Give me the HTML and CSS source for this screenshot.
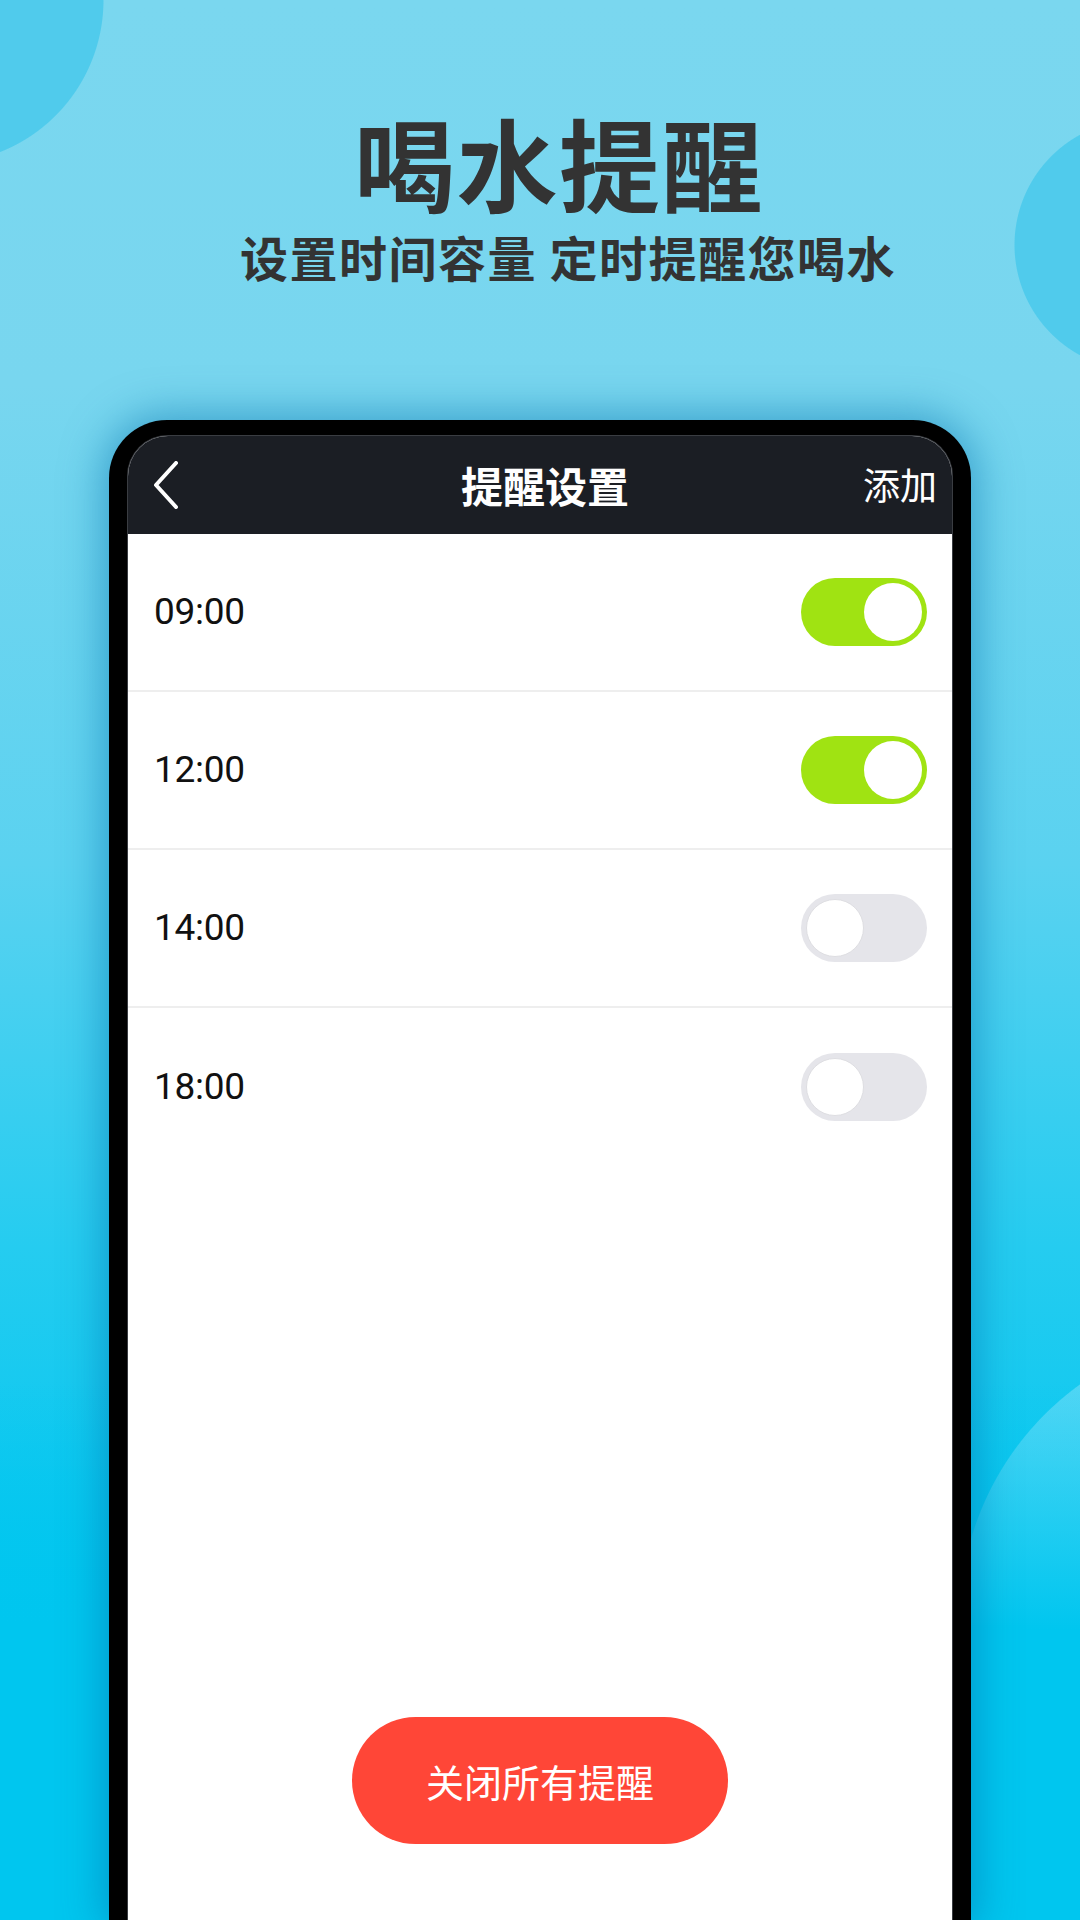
FILE: index.html
```html
<!DOCTYPE html>
<html lang="zh-CN">
<head>
    <meta charset="UTF-8">
    <meta name="viewport" content="width=device-width, initial-scale=1.0">
    <title>喝水提醒</title>
    <link rel="stylesheet" href="styles.css">
</head>
<body>
    <div class="intro">
        <h1 class="intro-title">喝水提醒</h1>
        <p class="intro-sub">设置时间容量 定时提醒您喝水</p>
    </div>

    <div class="phone">
        <div class="screen">
            <div class="topbar">
                <span class="back">
                    <svg width="26" height="48" viewBox="0 0 26 48">
                        <polyline points="23,2 3,24 23,46" fill="none" stroke="#fff" stroke-width="4" stroke-linecap="round" stroke-linejoin="round"/>
                    </svg>
                </span>
                <span class="topbar-title">提醒设置</span>
                <span class="topbar-action">添加</span>
            </div>

            <ul class="alarms">
                <li class="alarm">
                    <span class="alarm-time">09:00</span>
                    <span class="switch on"><span class="knob"></span></span>
                </li>
                <li class="alarm">
                    <span class="alarm-time">12:00</span>
                    <span class="switch on"><span class="knob"></span></span>
                </li>
                <li class="alarm">
                    <span class="alarm-time">14:00</span>
                    <span class="switch"><span class="knob"></span></span>
                </li>
                <li class="alarm">
                    <span class="alarm-time">18:00</span>
                    <span class="switch"><span class="knob"></span></span>
                </li>
            </ul>

            <button type="button" class="close-all">关闭所有提醒</button>
        </div>
    </div>
</body>
</html>
```

FILE: styles.css
```css
html, body {
    margin: 0;
    padding: 0;
}
body {
    width: 1080px;
    height: 1920px;
    overflow: hidden;
    font-family: "Noto Sans CJK SC", "Noto Sans", sans-serif;
    /* blobs + fade over the lower blob + base gradient */
    background:
        radial-gradient(circle at -60px 0, #50cbec 0 163px, transparent 164px),
        radial-gradient(circle at 1140px 245px, #50cbec 0 125px, transparent 126px),
        linear-gradient(rgba(0, 198, 239, 0) 1380px, rgba(0, 198, 239, 1) 1630px),
        radial-gradient(circle at 1250px 1620px, rgba(100, 218, 246, 0.75) 0 290px, transparent 291px),
        linear-gradient(#7ad7ef 0%, #78d6ef 20%, #5ad2f0 45%, #25ccf0 65%, #00c6ef 85%, #00c5ef 100%);
}

/* headline */
.intro {
    padding-left: 38px;
    text-align: center;
    color: #333;
}
.intro-title {
    margin: 101px 0 0;
    font-size: 101px;
    line-height: 1.2;
    font-weight: 700;
    letter-spacing: 1.5px;
}
.intro-sub {
    margin: 6px 0 0;
    padding-left: 18px;
    font-size: 48px;
    line-height: 1.2;
    font-weight: 700;
    letter-spacing: 1.5px;
}

/* phone mockup */
.phone {
    width: 862px;
    height: 1500px;
    box-sizing: border-box;
    margin: 134px auto 0;
    padding: 16px 19px 0;
    background: #000;
    border-radius: 58px 58px 0 0;
    box-shadow: 0 0 40px 6px rgba(0, 110, 170, 0.5);
}
.screen {
    height: 100%;
    display: flex;
    flex-direction: column;
    background: #fff;
    border-radius: 40px 40px 0 0;
    overflow: hidden;
    box-shadow: 0 0 0 1px #3a3d42;
}

.topbar {
    height: 98px;
    flex: none;
    display: flex;
    align-items: center;
    justify-content: space-between;
    padding: 0 15px 0 25px;
    background: #1b1e24;
    color: #fff;
}
.back {
    display: flex;
    width: 90px;
}
.topbar-title {
    font-size: 42px;
    font-weight: 700;
    line-height: 1;
}
.topbar-action {
    width: 90px;
    text-align: right;
    font-size: 37px;
    line-height: 1;
}

.alarms {
    list-style: none;
    margin: 0;
    padding: 0;
}
.alarm {
    height: 158px;
    box-sizing: border-box;
    display: flex;
    align-items: center;
    justify-content: space-between;
    padding: 0 25px 0 26px;
    border-bottom: 2px solid #eeeeee;
}
.alarm:last-child {
    border-bottom: none;
}
.alarm-time {
    font-family: Roboto, "Noto Sans", sans-serif;
    font-size: 37px;
    color: #111;
    letter-spacing: -0.3px;
}

.switch {
    width: 126px;
    height: 68px;
    box-sizing: border-box;
    padding: 5px;
    display: flex;
    border-radius: 34px;
    background: #e5e5ea;
}
.switch .knob {
    width: 58px;
    height: 58px;
    border-radius: 50%;
    background: #fff;
    box-sizing: border-box;
    border: 1px solid #dedee2;
}
.switch.on {
    justify-content: flex-end;
    background: #a0e312;
}
.switch.on .knob {
    border: none;
}

.close-all {
    margin: auto auto 76px;
    width: 376px;
    height: 127px;
    border: none;
    border-radius: 64px;
    background: #ff4637;
    color: #fff;
    font-family: "Noto Sans CJK SC", sans-serif;
    font-size: 38px;
    cursor: pointer;
}
```
